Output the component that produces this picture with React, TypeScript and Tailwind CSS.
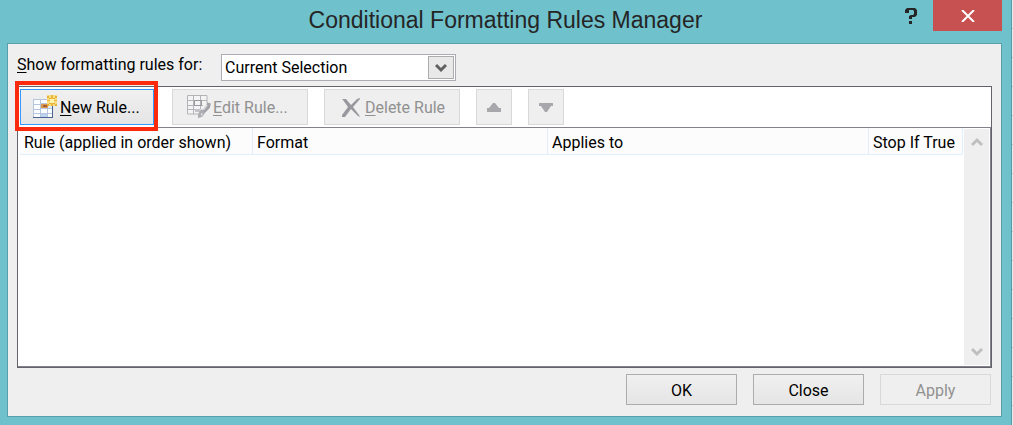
import type { ReactNode } from "react"

const columns = [
	{ label: "Rule (applied in order shown)", width: "w-[233px]" },
	{ label: "Format", width: "w-[295px]" },
	{ label: "Applies to", width: "" },
	{ label: "Stop If True", width: "w-[94px]" },
]

const NewRuleIcon = () => (
	<svg width="25" height="24" viewBox="0 0 25 24" aria-hidden="true" shapeRendering="crispEdges">
		<rect x="0" y="4" width="20" height="19" fill="#b4c5dc" />
		<g fill="#fbfdff">
			<rect x="1" y="5" width="6" height="4" />
			<rect x="8" y="5" width="6" height="3" />
			<rect x="1" y="10" width="6" height="4" />
			<rect x="1" y="15" width="6" height="3" />
			<rect x="8" y="14" width="6" height="4" />
			<rect x="15" y="14" width="4" height="4" />
			<rect x="1" y="19" width="6" height="3" />
			<rect x="15" y="19" width="4" height="3" />
		</g>
		<rect x="8" y="9" width="7" height="4" fill="#dc9a4d" />
		<rect x="10" y="10" width="4" height="2" fill="#a85a3a" />
		<rect x="15" y="11" width="4" height="2" fill="#dcebf8" />
		<rect x="8" y="19" width="6" height="3" fill="#bcd3ef" />
		<path d="M0 22.500H20M19.500 10V23" stroke="#4b6490" />
		<rect x="14" y="0" width="10" height="11" fill="#f7dc83" />
		<path d="M18 0h2v11h-2zM14 5h10v1h-10z" fill="#edb93c" />
		<path d="M14 1h2v2h-2zM22 1h2v2h-2zM14 9h2v2h-2zM22 9h2v2h-2zM16 3h2v1h-2zM20 3h2v1h-2zM16 8h2v1h-2zM20 8h2v1h-2z" fill="#e5b235" />
		<rect x="17" y="4" width="4" height="4" fill="#fff3b0" />
	</svg>
)

const EditRuleIcon = () => (
	<svg width="24" height="24" viewBox="0 0 24 24" aria-hidden="true">
		<path d="M.5.5H20V19H.5z" fill="#f4f4f5" />
		<path d="M.5.5H20V8M.5.5V19H11M1 5.500H20M1 10.500H16M1 14.500H13M6.500 1V19M13.500 1V14" fill="none" stroke="#b4b4b8" />
		<path d="M7.500 5.500h7v5h-7z" fill="none" stroke="#98989e" />
		<path d="M8 14h5v3H8z" fill="#c4c4c8" />
		<path d="M22 8l-1 4-5 5" fill="none" stroke="#a2a2a8" strokeWidth="4" />
		<path d="M20 10l-4 5" fill="none" stroke="#dadadd" strokeWidth="2" />
		<path d="M14 14l4 4-3 4-4 1v-4z" fill="#aeaeb3" />
		<path d="M14 18l2 1-2 2z" fill="#e2e2e5" />
	</svg>
)

const DeleteIcon = () => (
	<svg width="20" height="19" viewBox="0 0 20 19" aria-hidden="true" fill="#98989e">
		<path d="M1 1h4l5 6 6-6 3-1v1l-7 8 6 8 1 2-2-1-7-7-6 8H1v-2l6-8-5-7z" />
	</svg>
)

const Triangle = ({ down = false }: { down?: boolean }) => (
	<svg width="14" height="9" viewBox="0 0 14 9" aria-hidden="true" fill="#a8a8ac">
		<path d={down ? "M0 0h14v3h-2l-4 6H6L2 3H0z" : "M6 0h2l4 5h2v4H0V5h2z"} />
	</svg>
)

const Chevron = ({ up = false, color }: { up?: boolean; color: string }) => (
	<svg width="12" height="10" viewBox="0 0 12 10" aria-hidden="true" fill="none" stroke={color} strokeWidth="3">
		<path d={up ? "M1 8l5-5 5 5" : "M1 2l5 5 5-5"} />
	</svg>
)

const ToolButton = ({ label, children }: { label: string; children: ReactNode }) => (
	<button type="button" disabled aria-label={label} className="flex h-9 w-9 items-center justify-center border border-[#d9d9d9] bg-[#efefef]">
		{children}
	</button>
)

export default function App() {
	return (
		<div className="flex min-h-screen bg-[#e9ecec] font-[Roboto,sans-serif] text-[16px] leading-5 text-black">
			<section aria-labelledby="dialog-title" className="flex flex-1 flex-col border-r border-[#559ba5] bg-[#6fc1cc] pb-2">
				{/* Title bar */}
				<header className="grid h-[43px] grid-cols-[1fr_auto_1fr]">
					<span />
					<h1 id="dialog-title" className="pt-1.5 font-['Liberation_Sans',Arial,sans-serif] text-[23px] leading-7 text-[#252525]">
						Conditional Formatting Rules Manager
					</h1>
					<div className="flex items-start justify-end gap-1 pr-[9px]">
						<button type="button" aria-label="Help" className="flex h-[31px] w-9 items-center justify-center">
							<svg width="12" height="16" viewBox="0 0 12 16" aria-hidden="true" fill="#252525">
								<path d="M2 0h8l2 2v5l-2 2H7v2H4V8l2-1h2l1-1V3L8 2H4v3H0V2zM4 13h3v3H4z" />
							</svg>
						</button>
						<button type="button" aria-label="Close window" className="flex h-[31px] w-[69px] items-center justify-center bg-[#c75050]">
							<svg width="14" height="12" viewBox="0 0 14 12" aria-hidden="true" stroke="#fff" strokeWidth="2">
								<path d="M1 0l12 12M13 0L1 12" />
							</svg>
						</button>
					</div>
				</header>

				<main className="mr-[9px] ml-[7px] flex flex-1 flex-col border border-[#589fa9] bg-[#efefef] px-[9px] pt-2.5 pb-[11px]">
					<div className="flex items-start gap-4">
						<label htmlFor="scope" className="w-[188px] pt-px">
							<u className="underline-offset-2">S</u>how formatting rules for:
						</label>
						<div className="grid h-[27px] w-[235px] border border-[#abadb3] bg-white">
							<select id="scope" className="col-start-1 row-start-1 appearance-none pl-[3px]">
								<option>Current Selection</option>
							</select>
							<span className="pointer-events-none col-start-1 row-start-1 m-px flex w-[26px] items-center justify-center justify-self-end border border-[#acacac] bg-[#e9e9e9]">
								<Chevron color="#606060" />
							</span>
						</div>
					</div>

					<div className="mt-[5px] flex flex-1 flex-col border border-[#63636b] bg-white">
						{/* Toolbar */}
						<div className="flex h-[41px] items-center gap-4 border-b border-[#82828c] px-0.5">
							<div className="relative w-[136px]">
								<button type="button" className="flex h-9 w-[134px] items-center gap-0.5 border border-[#3399ff] bg-linear-to-b from-[#f0f0f0] to-[#e5e5e5] pl-3">
									<NewRuleIcon />
									<span className="pt-0.5"><u className="underline-offset-2">N</u>ew Rule...</span>
								</button>
								<span className="pointer-events-none absolute -top-2 -right-0.5 -bottom-1.5 -left-[5px] border-4 border-[#fb2a0c]" />
							</div>
							<button type="button" disabled className="flex h-9 w-[136px] items-center gap-0.5 border border-[#d9d9d9] bg-[#efefef] pl-3.5 text-[#919191]">
								<EditRuleIcon />
								<span className="pt-0.5"><u className="underline-offset-2">E</u>dit Rule...</span>
							</button>
							<button type="button" disabled className="flex h-9 w-[136px] items-center gap-1 border border-[#d9d9d9] bg-[#efefef] pl-4 text-[#919191]">
								<DeleteIcon />
								<span className="pt-0.5"><u className="underline-offset-2">D</u>elete Rule</span>
							</button>
							<ToolButton label="Move up"><Triangle /></ToolButton>
							<ToolButton label="Move down"><Triangle down /></ToolButton>
						</div>

						{/* Rules list */}
						<div className="flex flex-1 border-r border-b border-[#82828c] pl-0.5">
							<div className="flex-1">
								<table className="w-full table-fixed border-separate border-spacing-0">
									<thead>
										<tr>
											{columns.map(({ label, width }) => (
												<th key={label} scope="col" className={`${width} h-[27px] border-r border-b border-[#e0effb] bg-[#fcfcfc] p-0 pt-1 pl-1 text-left font-normal whitespace-nowrap`}>
													{label}
												</th>
											))}
										</tr>
									</thead>
									<tbody />
								</table>
							</div>
							<div className="m-px flex w-[25px] flex-col items-center justify-between bg-[#efefef] py-2">
								<button type="button" disabled aria-label="Scroll up"><Chevron up color="#bfbfbf" /></button>
								<button type="button" disabled aria-label="Scroll down"><Chevron color="#bfbfbf" /></button>
							</div>
						</div>
					</div>

					<footer className="mt-1.5 flex justify-end gap-4 pr-px">
						<button type="button" className="h-[31px] w-[111px] border border-[#acacac] bg-linear-to-b from-[#f0f0f0] to-[#e5e5e5] pt-0.5">OK</button>
						<button type="button" className="h-[31px] w-[111px] border border-[#acacac] bg-linear-to-b from-[#f0f0f0] to-[#e5e5e5] pt-0.5">Close</button>
						<button type="button" disabled className="h-[31px] w-[111px] border border-[#d9d9d9] bg-[#efefef] pt-0.5 text-[#919191]">Apply</button>
					</footer>
				</main>
			</section>
			{/* Sheet rows showing behind the window */}
			<div className="w-px bg-[repeating-linear-gradient(#e9ecec_0_28px,#bfc4c4_28px_29px)]" />
		</div>
	)
}
